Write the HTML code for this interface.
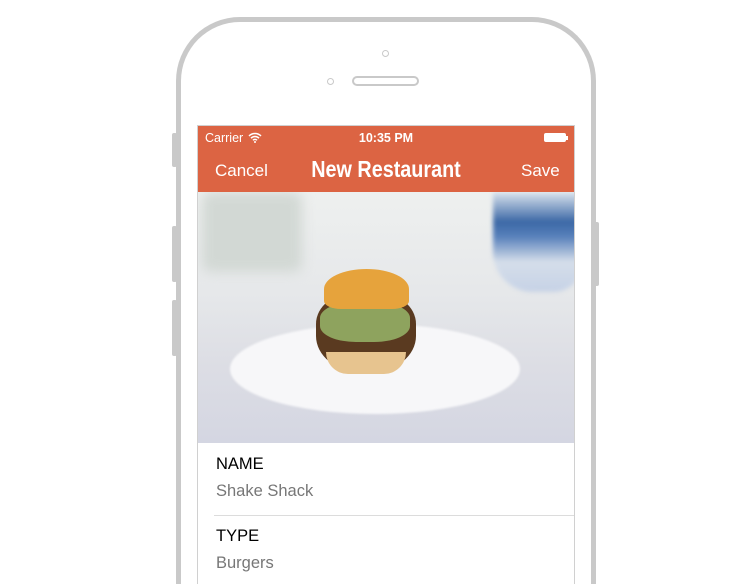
<!DOCTYPE html>
<html><head><style>
*{margin:0;padding:0;box-sizing:border-box}
html,body{width:755px;height:584px;overflow:hidden}
body{background:#fff;position:relative;font-family:"Liberation Sans",sans-serif}
.abs{position:absolute}
</style></head><body>
<div class="abs" style="left:176px;top:17px;width:420px;height:567px;border:5px solid #c9c9c9;border-bottom:none;border-radius:64px 64px 0 0;background:#fff"></div>
<div class="abs" style="left:172px;top:133px;width:5px;height:34px;background:#c9c9c9;border-radius:2px"></div>
<div class="abs" style="left:172px;top:226px;width:5px;height:56px;background:#c9c9c9;border-radius:2px"></div>
<div class="abs" style="left:172px;top:300px;width:5px;height:56px;background:#c9c9c9;border-radius:2px"></div>
<div class="abs" style="left:594px;top:222px;width:5px;height:64px;background:#c9c9c9;border-radius:2px"></div>
<div class="abs" style="left:382px;top:50px;width:7px;height:7px;border:1.5px solid #c9c9c9;border-radius:50%"></div>
<div class="abs" style="left:327px;top:78px;width:7px;height:7px;border:1.5px solid #c9c9c9;border-radius:50%"></div>
<div class="abs" style="left:352px;top:76px;width:67px;height:10px;border:2px solid #c9c9c9;border-radius:6px"></div>
<div class="abs" style="left:197px;top:125px;width:378px;height:459px;border:1px solid #d0d0d0;border-bottom:none;background:#fff"></div>
<div class="abs" style="left:198px;top:126px;width:376px;height:66px;background:#dc6443;color:#fff">
 <div class="abs" style="left:7px;top:5px;font-size:12.5px">Carrier</div>
 <svg class="abs" style="left:50px;top:6px" width="14" height="11" viewBox="0 0 14 11"><path d="M1 4a8.5 8.5 0 0 1 12 0M3 6.2a5.5 5.5 0 0 1 8 0M5 8.3a2.6 2.6 0 0 1 4 0" stroke="#fff" stroke-width="1.5" fill="none"/><circle cx="7" cy="10" r="1" fill="#fff"/></svg>
 <div class="abs" style="left:0;width:376px;text-align:center;top:5px;font-size:12.5px;font-weight:bold">10:35 PM</div>
 <div class="abs" style="left:346px;top:7px;width:22px;height:9px;background:#fff;border-radius:2px"></div>
 <div class="abs" style="left:368px;top:10px;width:2px;height:4px;background:#fff"></div>
 <div class="abs" style="left:17px;top:35px;font-size:17px">Cancel</div>
 <div class="abs" style="left:0;width:376px;text-align:center;top:30px;font-size:23px;font-weight:bold;transform:scaleX(0.86)">New Restaurant</div>
 <div class="abs" style="left:323px;top:35px;font-size:17px">Save</div>
</div>
<div class="abs" style="left:198px;top:192px;width:376px;height:251px;overflow:hidden;background:linear-gradient(180deg,#eef0ef 0%,#e6e8ea 40%,#dcdde4 70%,#d4d6e2 100%)">
 <div class="abs" style="left:4px;top:0;width:100px;height:80px;background:#d2d8d4;filter:blur(6px);border-radius:8px"></div>
 <div class="abs" style="left:295px;top:0;width:90px;height:100px;background:linear-gradient(180deg,#dbe4ee 0%,#3c68a6 30%,#5a82bc 45%,#d5deea 70%,#c6d2e6 100%);border-radius:0 0 30px 40px;filter:blur(2px)"></div>
 <div class="abs" style="left:32px;top:132px;width:290px;height:90px;background:#f7f7f9;border-radius:50%;filter:blur(1px)"></div>
 <div class="abs" style="left:118px;top:100px;width:100px;height:80px;background:#5a3a20;border-radius:40% 40% 45% 45%"></div>
 <div class="abs" style="left:122px;top:110px;width:90px;height:40px;background:#8ea35e;border-radius:40%"></div>
 <div class="abs" style="left:128px;top:160px;width:80px;height:22px;background:#e7c48f;border-radius:0 0 40px 40px"></div>
 <div class="abs" style="left:126px;top:77px;width:85px;height:40px;background:#e6a33c;border-radius:50% 50% 20% 20%"></div>
</div>
<div class="abs" style="left:216px;top:455px;font-size:16.5px;color:#000">NAME</div>
<div class="abs" style="left:216px;top:482px;font-size:16.5px;color:#777">Shake Shack</div>
<div class="abs" style="left:214px;top:515px;width:360px;height:1px;background:#dcdcdc"></div>
<div class="abs" style="left:216px;top:527px;font-size:16.5px;color:#000">TYPE</div>
<div class="abs" style="left:216px;top:554px;font-size:16.5px;color:#777">Burgers</div>
</body></html>
